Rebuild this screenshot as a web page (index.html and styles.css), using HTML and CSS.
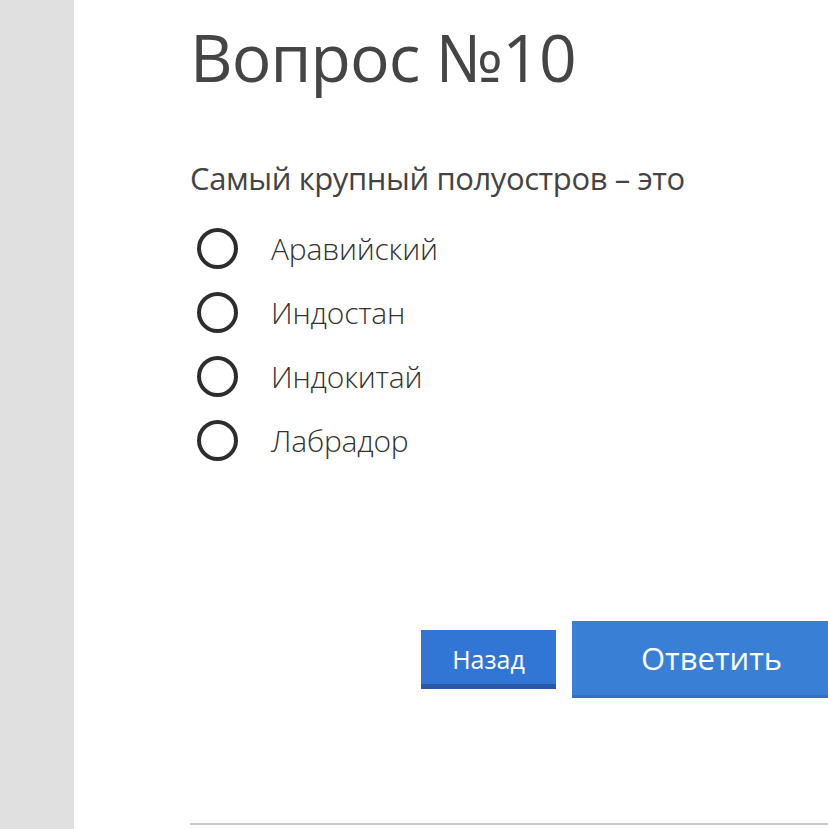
FILE: index.html
```html
<!DOCTYPE html>
<html lang="ru">
<head>
<meta charset="utf-8">
<title>Вопрос №10</title>
<link rel="stylesheet" href="styles.css">
</head>
<body>
<div class="page">
  <aside class="sidebar"></aside>
  <main class="content">
    <h1 class="title">Вопрос №10</h1>
    <p class="question">Самый крупный полуостров – это</p>
    <ul class="options">
      <li class="option"><span class="radio"></span><span class="label">Аравийский</span></li>
      <li class="option"><span class="radio"></span><span class="label">Индостан</span></li>
      <li class="option"><span class="radio"></span><span class="label">Индокитай</span></li>
      <li class="option"><span class="radio"></span><span class="label">Лабрадор</span></li>
    </ul>
    <div class="actions">
      <button class="btn btn-back">Назад</button>
      <button class="btn btn-answer">Ответить</button>
    </div>
    <div class="divider"></div>
  </main>
</div>
</body>
</html>
```
FILE: styles.css
```css
html, body {
  margin: 0;
  padding: 0;
  background: #ffffff;
  overflow: hidden;
}
.page {
  display: flex;
  width: 828px;
  height: 829px;
  font-family: "Open Sans", "Noto Sans", sans-serif;
  color: #444444;
}
.sidebar {
  width: 74px;
  flex: none;
  background: #e0e0e0;
}
.content {
  flex: 1;
  min-width: 0;
  padding-left: 116px;
  display: flex;
  flex-direction: column;
  overflow: hidden;
}
.title {
  margin: 11px 0 0 0;
  font-size: 66px;
  font-weight: 400;
  line-height: 90px;
  color: #454545;
  letter-spacing: -0.9px;
  white-space: nowrap;
}
.question {
  margin: 57px 0 0 0;
  font-size: 31px;
  line-height: 40px;
  color: #444444;
  letter-spacing: -0.4px;
  white-space: nowrap;
}
.options {
  list-style: none;
  margin: 18px 0 0 0;
  padding: 0;
  display: flex;
  flex-direction: column;
}
.option {
  display: flex;
  align-items: center;
  height: 64px;
}
.radio {
  width: 33px;
  height: 33px;
  border: 4px solid #2d2d2d;
  border-radius: 50%;
  margin-left: 7px;
  flex: none;
}
.label {
  margin-left: 33px;
  font-size: 30px;
  font-weight: 300;
  color: #333333;
  letter-spacing: -0.2px;
  white-space: nowrap;
}
.actions {
  display: flex;
  align-items: flex-start;
  margin-top: 149px;
  margin-left: 231px;
  gap: 16px;
}
.btn {
  border: none;
  font-family: "Open Sans", "Noto Sans", sans-serif;
  color: #ffffff;
  padding: 0;
  cursor: pointer;
  flex: none;
  box-sizing: border-box;
}
.btn-back {
  margin-top: 9px;
  width: 135px;
  height: 59px;
  background: #3276d5;
  border-bottom: 5px solid #2858a6;
  font-size: 25px;
  padding-top: 4px;
}
.btn-answer {
  width: 280px;
  height: 77px;
  background: #3a7fd6;
  border-bottom: 3px solid #336fc2;
  font-size: 31px;
  text-align: left;
  padding-left: 69px;
}
.divider {
  margin-top: 125px;
  height: 2px;
  background: #c8c8c8;
  width: 700px;
  flex: none;
}
```
